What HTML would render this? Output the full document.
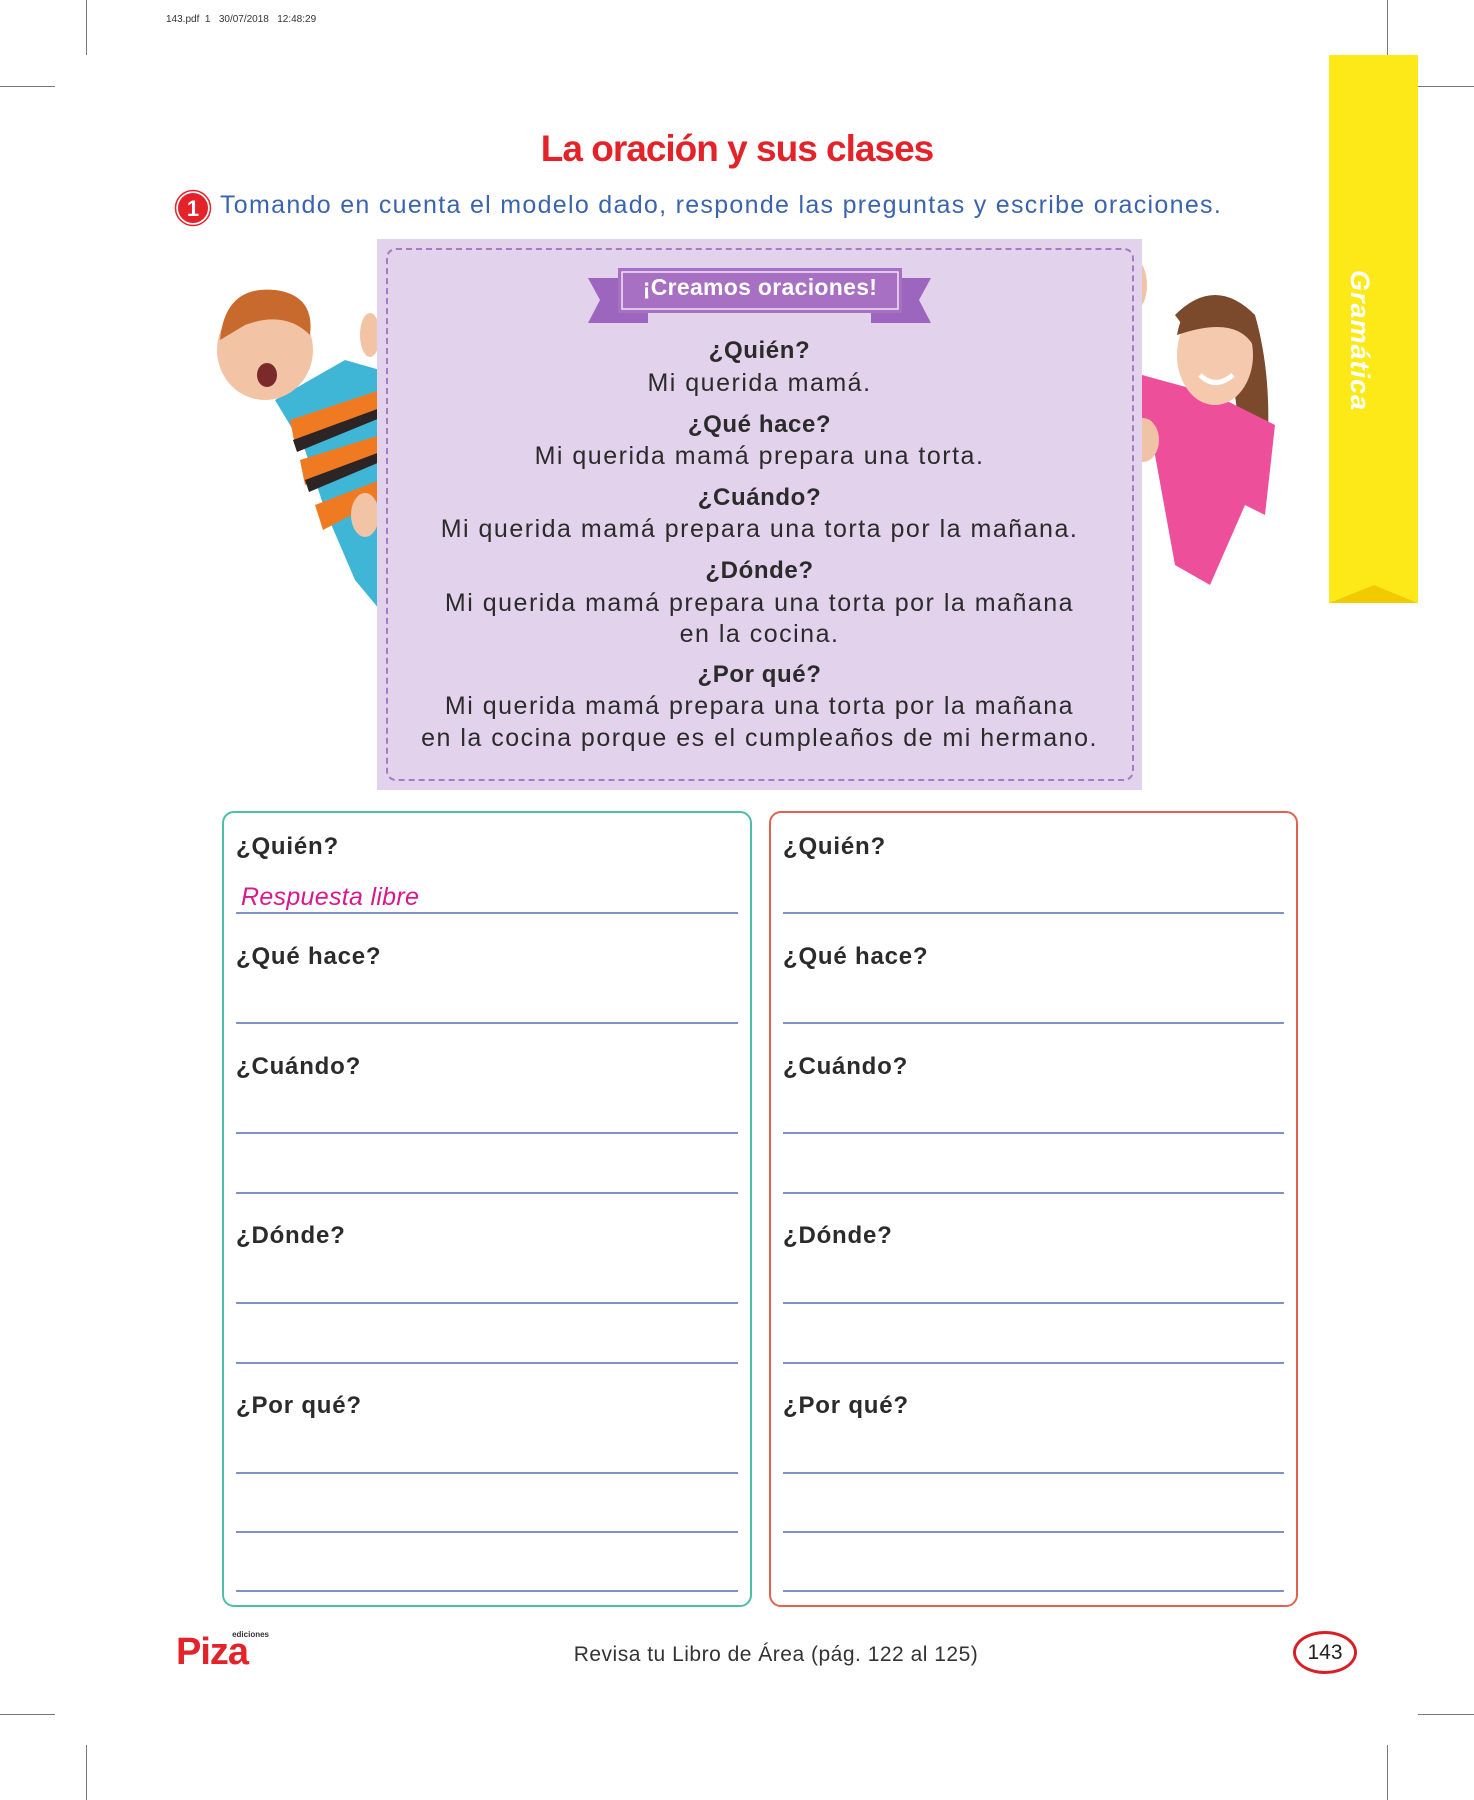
<!DOCTYPE html>
<html><head><meta charset="utf-8">
<style>
*{margin:0;padding:0;box-sizing:border-box}
body{width:1474px;height:1800px;background:#fff;position:relative;overflow:hidden;font-family:"Liberation Sans",sans-serif}
.a{position:absolute}
.ln{position:absolute;background:#777}
.c{position:absolute;left:377px;width:765px;text-align:center;color:#2b2b2b;font-size:25px;line-height:28px;letter-spacing:1.5px}
.b{font-weight:bold;font-size:24px;letter-spacing:0.6px}
.box{position:absolute;top:811px;height:796px;border:2px solid;border-radius:12px}
.lab{position:absolute;left:12px;font-weight:bold;font-size:24px;color:#2b2b2b;letter-spacing:0.8px}
.hl{position:absolute;left:12px;right:12px;height:2px;background:#8090c8}
</style></head><body>
<div class="ln" style="left:86px;top:0;width:1px;height:55px"></div>
<div class="ln" style="left:0;top:86px;width:55px;height:1px"></div>
<div class="ln" style="left:1387px;top:0;width:1px;height:55px"></div>
<div class="ln" style="left:1418px;top:86px;width:56px;height:1px"></div>
<div class="ln" style="left:0;top:1714px;width:55px;height:1px"></div>
<div class="ln" style="left:86px;top:1745px;width:1px;height:55px"></div>
<div class="ln" style="left:1418px;top:1714px;width:56px;height:1px"></div>
<div class="ln" style="left:1387px;top:1745px;width:1px;height:55px"></div>
<div class="a" style="left:166px;top:14px;font-size:10px;color:#333">143.pdf&nbsp;&nbsp;1&nbsp;&nbsp;&nbsp;30/07/2018&nbsp;&nbsp;&nbsp;12:48:29</div>

<svg class="a" style="left:1329px;top:55px" width="90" height="550"><polygon points="0,0 89,0 89,548 45,530 0,548" fill="#fde918"/><polygon points="0,548 45,530 89,548" fill="#f3c900"/></svg>
<div class="a" style="left:1345px;top:270px;width:40px;height:155px;">
<div style="transform:rotate(90deg);transform-origin:0 0;position:absolute;left:30px;top:0;white-space:nowrap;color:#fff;font-weight:bold;font-style:italic;font-size:27px;letter-spacing:1px">Gramática</div></div>

<div class="a" style="left:0;width:1474px;top:128px;text-align:center;color:#e42229;font-size:37px;font-weight:bold;letter-spacing:-1px">La oración y sus clases</div>
<svg class="a" style="left:174px;top:189px" width="38" height="38"><circle cx="19" cy="19" r="16" fill="#e42229" stroke="#fff" stroke-width="2"/><circle cx="19" cy="19" r="17.5" fill="none" stroke="#e42229" stroke-width="1.5"/><text x="19" y="27" text-anchor="middle" fill="#fff" font-family="Liberation Sans" font-weight="bold" font-size="22">1</text></svg>
<div class="a" style="left:220px;top:191px;color:#3b64ae;font-size:25px;white-space:nowrap;letter-spacing:1.3px">Tomando en cuenta el modelo dado, responde las preguntas y escribe oraciones.</div>

<svg class="a" style="left:205px;top:280px" width="180" height="350">
<path d="M70,120 L140,80 L175,90 L175,330 L150,300 L120,230 L100,170 Z" fill="#3fb6d6"/>
<path d="M85,140 L175,110 L175,130 L90,165Z M95,180 L175,155 L175,175 L100,205Z M110,225 L175,200 L175,220 L118,250Z" fill="#f07a22"/>
<path d="M88,160 L175,128 L175,138 L92,172Z M100,200 L175,172 L175,182 L104,212Z" fill="#2d2525"/>
<ellipse cx="60" cy="70" rx="48" ry="50" fill="#f2c3a4"/>
<path d="M15,60 Q20,5 70,10 Q110,15 105,55 Q80,30 40,45 Z" fill="#c8692e"/>
<ellipse cx="62" cy="95" rx="10" ry="12" fill="#7a2a2a"/>
<ellipse cx="165" cy="55" rx="10" ry="22" fill="#f2c3a4"/>
<ellipse cx="160" cy="235" rx="14" ry="22" fill="#f2c3a4"/>
</svg>
<svg class="a" style="left:1115px;top:255px" width="165" height="330">
<ellipse cx="20" cy="30" rx="12" ry="25" fill="#f0c2a6"/>
<path d="M60,60 Q100,20 140,60 Q160,130 150,220 L130,220 L120,140 Z" fill="#7b4a2c"/>
<path d="M27,120 L100,140 L160,170 L150,260 L130,250 L95,330 L60,310 L40,200 L27,200Z" fill="#ee4f9a"/>
<ellipse cx="100" cy="100" rx="38" ry="50" fill="#f4c9ad"/>
<path d="M62,80 Q70,35 110,42 Q140,50 138,90 Q120,60 62,80Z" fill="#7b4a2c"/>
<path d="M85,120 Q100,135 118,120" stroke="#fff" stroke-width="5" fill="none"/>
<ellipse cx="28" cy="185" rx="16" ry="22" fill="#f0c2a6"/>
</svg>

<div class="a" style="left:377px;top:239px;width:765px;height:551px;background:#e3d2ec"></div>
<div class="a" style="left:386px;top:248px;width:748px;height:533px;border:2px dashed #a57cc4;border-radius:10px"></div>
<svg class="a" style="left:588px;top:266px" width="344" height="58">
<polygon points="0,12 60,12 60,57 0,57 12,34" fill="#9c66be"/>
<polygon points="343,12 283,12 283,57 343,57 331,34" fill="#9c66be"/>
<rect x="30" y="2" width="284" height="45" fill="#a870c2"/>
<rect x="34" y="6" width="276" height="37" fill="none" stroke="#efe2f5" stroke-width="1.5"/>
</svg>
<div class="a" style="left:618px;top:274px;width:284px;text-align:center;color:#fff;font-weight:bold;font-size:23px;letter-spacing:0.3px">¡Creamos oraciones!</div>
<div class="c b" style="top:337px">¿Quién?</div>
<div class="c" style="top:369px">Mi querida mamá.</div>
<div class="c b" style="top:411px">¿Qué hace?</div>
<div class="c" style="top:442px">Mi querida mamá prepara una torta.</div>
<div class="c b" style="top:484px">¿Cuándo?</div>
<div class="c" style="top:515px">Mi querida mamá prepara una torta por la mañana.</div>
<div class="c b" style="top:557px">¿Dónde?</div>
<div class="c" style="top:589px">Mi querida mamá prepara una torta por la mañana</div>
<div class="c" style="top:620px">en la cocina.</div>
<div class="c b" style="top:661px">¿Por qué?</div>
<div class="c" style="top:692px">Mi querida mamá prepara una torta por la mañana</div>
<div class="c" style="top:724px">en la cocina porque es el cumpleaños de mi hermano.</div>

<div class="box" style="left:222px;width:530px;border-color:#4dbea7">
<div class="lab" style="top:20px">¿Quién?</div>
<div class="a" style="left:17px;top:70px;color:#d7198b;font-style:italic;font-size:25px;letter-spacing:0.3px">Respuesta libre</div>
<div class="hl" style="top:99px"></div>
<div class="lab" style="top:130px">¿Qué hace?</div>
<div class="hl" style="top:209px"></div>
<div class="lab" style="top:240px">¿Cuándo?</div>
<div class="hl" style="top:319px"></div>
<div class="hl" style="top:379px"></div>
<div class="lab" style="top:409px">¿Dónde?</div>
<div class="hl" style="top:489px"></div>
<div class="hl" style="top:549px"></div>
<div class="lab" style="top:579px">¿Por qué?</div>
<div class="hl" style="top:659px"></div>
<div class="hl" style="top:718px"></div>
<div class="hl" style="top:777px"></div>
</div>
<div class="box" style="left:769px;width:529px;border-color:#e2624f">
<div class="lab" style="top:20px">¿Quién?</div>
<div class="hl" style="top:99px"></div>
<div class="lab" style="top:130px">¿Qué hace?</div>
<div class="hl" style="top:209px"></div>
<div class="lab" style="top:240px">¿Cuándo?</div>
<div class="hl" style="top:319px"></div>
<div class="hl" style="top:379px"></div>
<div class="lab" style="top:409px">¿Dónde?</div>
<div class="hl" style="top:489px"></div>
<div class="hl" style="top:549px"></div>
<div class="lab" style="top:579px">¿Por qué?</div>
<div class="hl" style="top:659px"></div>
<div class="hl" style="top:718px"></div>
<div class="hl" style="top:777px"></div>
</div>

<div class="a" style="left:176px;top:1632px;width:95px;height:36px">
<div class="a" style="right:2px;top:-2px;font-size:8px;color:#333;font-weight:bold">ediciones</div>
<div class="a" style="left:0;top:2px;font-size:38px;line-height:36px;font-weight:bold;color:#e42229;letter-spacing:-1px">Piza</div>
</div>
<div class="a" style="left:0;width:1552px;top:1643px;text-align:center;color:#333;font-size:21px;letter-spacing:0.5px">Revisa tu Libro de Área (pág. 122 al 125)</div>
<div class="a" style="left:1293px;top:1631px;width:64px;height:43px;border:3px solid #d81f26;border-radius:50%;text-align:center;font-size:21px;line-height:37px;color:#222">143</div>
</body></html>
